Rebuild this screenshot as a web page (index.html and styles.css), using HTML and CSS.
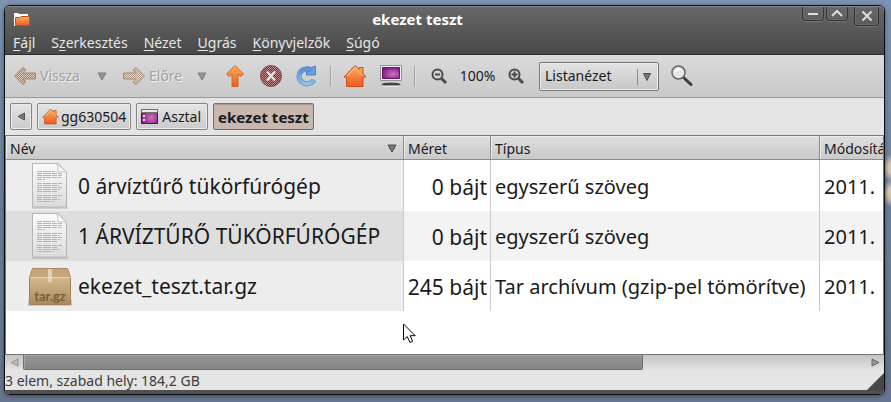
FILE: index.html
```
<!DOCTYPE html>
<html lang="hu">
<head>
<meta charset="utf-8">
<title>ekezet teszt</title>
<link rel="stylesheet" href="styles.css">
</head>
<body>
<svg class="defs" aria-hidden="true">
  <defs>
    <linearGradient id="orange" x1="0" y1="0" x2="0" y2="1"><stop offset="0" stop-color="#f9b262"/><stop offset="1" stop-color="#ef5a22"/></linearGradient>
    <linearGradient id="blue" x1="0" y1="0" x2="0" y2="1"><stop offset="0" stop-color="#5a95d2"/><stop offset="1" stop-color="#8fbde8"/></linearGradient>
    <radialGradient id="violet" cx=".6" cy=".6" r=".7"><stop offset="0" stop-color="#cf6fc6"/><stop offset="1" stop-color="#77187c"/></radialGradient>
    <linearGradient id="paper" x1="0" y1="0" x2="0" y2="1"><stop offset="0" stop-color="#fbfbfb"/><stop offset="1" stop-color="#dcdcdc"/></linearGradient>
    <linearGradient id="box" x1="0" y1="0" x2="0" y2="1"><stop offset="0" stop-color="#d3b98f"/><stop offset="1" stop-color="#a98a5d"/></linearGradient>
    <pattern id="check-brown" width="2" height="2" patternUnits="userSpaceOnUse"><rect width="2" height="2" fill="#d9cbbf"/><path fill="#b97c4e" d="M0 0h1v1H0zM1 1h1v1H1z"/></pattern>
    <pattern id="check-tan" width="2" height="2" patternUnits="userSpaceOnUse"><rect width="2" height="2" fill="#d8d2ca"/><path fill="#b5a08c" d="M0 0h1v1H0zM1 1h1v1H1z"/></pattern>
    <pattern id="check-red" width="2" height="2" patternUnits="userSpaceOnUse"><rect width="2" height="2" fill="#c08c8c"/><path fill="#82272b" d="M0 0h1v1H0zM1 1h1v1H1z"/></pattern>
    <symbol id="house" viewBox="0 0 24 24"><path fill="url(#orange)" stroke="#c94f1c" d="M12 1.500L16 5.500V3.500h4v6l3 3.500h-3v9.500H3.500V13H1z"/><path fill="none" stroke="#fbc795" d="M4 12L12 3.500l8 8.500"/></symbol>
    <symbol id="document" viewBox="0 0 38 48"><path fill="#000" opacity=".12" d="M1 45h36v2H1z"/><path fill="url(#paper)" stroke="#b4b4b4" d="M1.500 1.500h26l8 9v34.500h-34z"/><path fill="#fff" stroke="#c4c4c4" d="M26 1.500q2 5 .5 8.500 5-1 9 .5z"/><path stroke="#b4b4b4" stroke-dasharray="5 1 8 1" d="M6 9.500h18M6 11.500h25M6 13.500h25M6 15.500h24M6 17.500h8M6 21.500h25M6 23.500h22M6 25.500h25M6 27.500h23M6 29.500h21M6 33.500h25M6 35.500h20M6 37.500h23M6 39.500h17"/></symbol>
  </defs>
</svg>
<main class="window">
  <header class="chrome">
    <div class="titlebar">
      <svg class="app-icon" width="18" height="16" viewBox="0 0 18 16" aria-hidden="true"><path fill="#fff" d="M1 1h4l1 1h9v3H3v9H1z"/><path fill="url(#orange)" stroke="#c8491a" d="M2.500 13.500V5.500H7l1-1h8.500v9z"/></svg>
      <h1 class="title">ekezet teszt</h1>
      <div class="controls">
        <button class="control" type="button" aria-label="Kis méret"><svg width="12" height="12" viewBox="0 0 12 12"><path d="M1 6h10"/></svg></button>
        <button class="control" type="button" aria-label="Teljes méret"><svg width="12" height="12" viewBox="0 0 12 12"><path d="M1 8l5-5 5 5"/></svg></button>
        <button class="control control-close" type="button" aria-label="Bezárás"><svg width="12" height="12" viewBox="0 0 12 12"><path d="M1.500 1.500l9 9M10.500 1.500l-9 9"/></svg></button>
      </div>
    </div>
    <nav class="menubar">
      <button type="button"><u>F</u>ájl</button>
      <button type="button">S<u>z</u>erkesztés</button>
      <button type="button"><u>N</u>ézet</button>
      <button type="button"><u>U</u>grás</button>
      <button type="button"><u>K</u>önyvjelzők</button>
      <button type="button"><u>S</u>úgó</button>
    </nav>
  </header>

  <div class="toolbar">
    <button class="nav back" type="button" disabled><svg width="24" height="20" viewBox="0 0 24 20"><path fill="url(#check-brown)" stroke="#b58360" stroke-linejoin="round" d="M1.500 10L10 1.500l3 2.500-3 3h12.500v6H10l3 3-3 2.500z"/></svg>Vissza</button>
    <button class="history" type="button" aria-label="Előzmények vissza"><svg width="10" height="9" viewBox="0 0 10 9"><path fill="#929292" stroke="#818181" d="M1 1h8L5 8z"/></svg></button>
    <button class="nav forward" type="button" disabled><svg width="24" height="20" viewBox="0 0 24 20"><path fill="url(#check-tan)" stroke="#a08c78" stroke-linejoin="round" d="M22.500 10L14 1.500l-3 2.500 3 3H1.500v6H14l-3 3 3 2.500z"/></svg>Előre</button>
    <button class="history" type="button" aria-label="Előzmények előre"><svg width="10" height="9" viewBox="0 0 10 9"><path fill="#929292" stroke="#818181" d="M1 1h8L5 8z"/></svg></button>
    <button class="tool" type="button" aria-label="Fel"><svg width="20" height="24" viewBox="0 0 20 24"><path fill="url(#orange)" stroke="#d4641f" stroke-linejoin="round" d="M10 1.500l8.500 8.500-2.500 2.500-3-2.500v12.500H7V10l-3 2.500L1.500 10z"/></svg></button>
    <button class="tool" type="button" aria-label="Leállítás" disabled><svg width="24" height="24" viewBox="0 0 24 24"><circle cx="12" cy="12" r="10.500" fill="url(#check-red)" stroke="#8d4a4b"/><path stroke="#f2eded" stroke-width="2" d="M8 7.500l8 9M16 7.500l-8 9"/></svg></button>
    <button class="tool" type="button" aria-label="Frissítés"><svg width="22" height="24" viewBox="0 0 22 24"><path fill="none" stroke="#4c83bd" stroke-width="5" d="M18 16a8 7.500 0 1 1-2-9.500"/><path fill="#6aa2dc" stroke="#4c83bd" stroke-linejoin="round" d="M19.500 2v9h-9v-3l4-1 2-4z"/><path fill="none" stroke="url(#blue)" stroke-width="4" d="M18 16a8 7.500 0 1 1-2-9.500"/></svg></button>
    <span class="separator"></span>
    <button class="tool" type="button" aria-label="Saját mappa"><svg width="24" height="24"><use href="#house"/></svg></button>
    <button class="tool" type="button" aria-label="Számítógép"><svg width="24" height="24" viewBox="0 0 24 24"><path fill="#f4f4f4" stroke="#929292" d="M1.500 1.500h21v15h-21z"/><path fill="url(#violet)" stroke="#61165f" d="M3.500 3.500h17v11h-17z"/><path fill="#ddd" d="M9 17h6v2H9z"/><ellipse cx="12" cy="20.500" rx="9.500" ry="2" fill="#444"/><path fill="#eee" d="M3 21.500h18l-2 1.500H5z"/></svg></button>
    <span class="separator"></span>
    <button class="tool" type="button" aria-label="Kicsinyítés"><svg width="18" height="18" viewBox="0 0 18 18"><g fill="none" stroke="#4a4a4a" stroke-width="2"><circle cx="7.500" cy="7.500" r="5"/><path d="M5 7.500h5"/><path stroke-width="3" d="M11.500 11.500l4.500 4.500"/></g></svg></button>
    <output class="zoom">100%</output>
    <button class="tool" type="button" aria-label="Nagyítás"><svg width="18" height="18" viewBox="0 0 18 18"><g fill="none" stroke="#4a4a4a" stroke-width="2"><circle cx="7.500" cy="7.500" r="5"/><path d="M4.500 7.500h6M7.500 4.500v6"/><path stroke-width="3" d="M11.500 11.500l4.500 4.500"/></g></svg></button>
    <div class="combo">
      <select aria-label="Nézet"><option>Listanézet</option></select>
      <svg class="combo-arrow" width="18" height="18" viewBox="0 0 18 18" aria-hidden="true"><path stroke="#8b8b8b" d="M.5 1v16"/><path fill="#777" stroke="#4f4f4f" d="M6.500 5.500h7L10 12.500z"/></svg>
    </div>
    <button class="tool" type="button" aria-label="Keresés"><svg width="24" height="24" viewBox="0 0 24 24"><path stroke="#3d3d3d" stroke-width="3" stroke-linecap="round" d="M13 13l8 7.500"/><circle cx="8.500" cy="8.500" r="6.500" fill="#e6e6e6" stroke="#666" stroke-width="1.500"/><path fill="#fff" opacity=".8" d="M4.500 8a4 4 0 0 1 7-2z"/></svg></button>
  </div>

  <nav class="pathbar">
    <button class="crumb crumb-scroll" type="button" aria-label="Előző"><svg width="8" height="9" viewBox="0 0 8 9"><path fill="#777" stroke="#555" d="M7.500 1v7L1 4.500z"/></svg></button>
    <button class="crumb" type="button"><svg width="17" height="17"><use href="#house"/></svg>gg630504</button>
    <button class="crumb crumb-place" type="button"><svg width="17" height="15" viewBox="0 0 17 15"><path fill="url(#violet)" stroke="#4c1450" d="M.5.500h16v14H.5z"/><path fill="#eeeae0" stroke="#77705f" d="M.5.500h16v3H.5z"/><path fill="#f3d9f1" d="M2 6h2v2H2zM2 10h2v2H2z"/></svg>Asztal</button>
    <button class="crumb crumb-current" type="button" aria-current="page">ekezet teszt</button>
  </nav>

  <section class="list">
    <table class="files">
      <colgroup><col class="col-name"><col class="col-size"><col class="col-type"><col></colgroup>
      <thead>
        <tr>
          <th scope="col"><span class="sorted">Név<svg width="10" height="9" viewBox="0 0 10 9" aria-hidden="true"><path fill="#777" stroke="#4c4c4c" d="M1 1h8L5 8z"/></svg></span></th>
          <th scope="col">Méret</th><th scope="col">Típus</th><th scope="col">Módosítás</th>
        </tr>
      </thead>
      <tbody>
        <tr><td><span class="file"><svg width="38" height="48"><use href="#document"/></svg>0 árvíztűrő tükörfúrógép</span></td><td>0 bájt</td><td>egyszerű szöveg</td><td>2011.</td></tr>
        <tr><td><span class="file"><svg width="38" height="48"><use href="#document"/></svg>1 ÁRVÍZTŰRŐ TÜKÖRFÚRÓGÉP</span></td><td>0 bájt</td><td>egyszerű szöveg</td><td>2011.</td></tr>
        <tr><td><span class="file"><svg width="44" height="40" viewBox="0 -2 44 40"><path fill="#000" opacity=".15" d="M0 32h44v6H0z"/><path fill="#c5a67c" stroke="#a88a62" d="M4.500 .5h35l3 9h-41z"/><path fill="url(#box)" stroke="#a1845a" d="M1.500 9.500h41v27h-41z"/><path stroke="#e5d3b4" d="M2 9.500h40"/><path fill="#e7dac5" opacity=".8" d="M20 1h4v13h-4z"/><text class="box-label" x="22" y="33" text-anchor="middle">tar.gz</text></svg>ekezet_teszt.tar.gz</span></td><td>245 bájt</td><td>Tar archívum (gzip-pel tömörítve)</td><td>2011.</td></tr>
      </tbody>
    </table>
    <svg class="pointer" width="14" height="21" viewBox="0 0 14 21" aria-hidden="true"><path fill="#fff" stroke="#000" d="M.5 1v16l3.700-3.500L7 19.500l2.700-1.200-2.500-5.600h5z"/></svg>
  </section>

  <div class="scrollbar">
    <svg class="scroll-arrow" width="9" height="9" viewBox="0 0 9 9"><path fill="#bbb" stroke="#929292" d="M8 1v7L1 4.500z"/></svg>
    <div class="track"><div class="thumb"></div></div>
    <svg class="scroll-arrow" width="9" height="9" viewBox="0 0 9 9"><path fill="#999" stroke="#666" d="M1 1v7l7-3.500z"/></svg>
  </div>
  <footer class="status">3 elem, szabad hely: 184,2 GB</footer>
  <svg class="grip" width="18" height="18" viewBox="0 0 18 18" aria-hidden="true"><path fill="#484848" d="M18 0v18H0z"/></svg>
</main>
</body>
</html>
```
FILE: styles.css
```
* { box-sizing: border-box; }

body {
  margin: 0;
  min-height: 100vh;
  padding: 5px 6px 7px 4px;
  display: flex;
  background:
    radial-gradient(ellipse 8px 14px at 100% 168px, #d8c3ac 40%, transparent),
    radial-gradient(ellipse 8px 14px at 100% 193px, #d8c3ac 40%, transparent),
    linear-gradient(#7b92b0, #6a809f 50%, #66758e);
  color: #1a1a1a;
  font-family: "Noto Sans", "Open Sans", sans-serif;
  font-size: 14px;
  line-height: 18px;
}

svg { display: block; flex: none; }
.defs { position: absolute; width: 0; height: 0; }

button {
  margin: 0;
  padding: 0;
  border: 0;
  background: none;
  color: inherit;
  font: inherit;
}

.window {
  position: relative;
  flex: 1;
  min-width: 0;
  display: flex;
  flex-direction: column;
  overflow: hidden;
  border: 1px solid #0c0c0c;
  border-radius: 6px;
  background: #e4e4e4;
  box-shadow: 0 1px 4px rgba(0, 0, 0, .4);
}

.chrome {
  border-top: 1px solid #8a8a88;
  border-bottom: 1px solid #2e2e2e;
  background: linear-gradient(#686868, #484848);
  color: #e6e6e6;
}

.titlebar { display: flex; height: 27px; }
.app-icon { margin: 5px 2px 0 8px; }
.title {
  flex: 1;
  margin: 0;
  padding-top: 3px;
  color: #fff;
  font-size: 15px;
  line-height: 18px;
  text-align: center;
}

.controls { display: flex; align-items: flex-start; gap: 2px; padding-right: 5px; }
.control {
  display: grid;
  place-items: center;
  width: 22px;
  height: 14px;
  border: 1px solid #333;
  border-top: 0;
  border-radius: 0 0 4px 4px;
  box-shadow: 0 1px 0 #777, inset 0 0 0 1px #6c6c6c;
}
.control-close { width: 25px; height: 19px; margin-left: 4px; }
.control path { fill: none; stroke: #dedede; stroke-width: 2; }

.menubar { display: flex; gap: 16px; height: 20px; padding-left: 8px; }
.menubar button { line-height: 18px; height: 18px; }
.menubar u { text-underline-offset: 2px; }

.toolbar {
  display: flex;
  align-items: center;
  height: 43px;
  padding-left: 8px;
  border-bottom: 1px solid #999;
  background: linear-gradient(#dadada, #c9c9c9);
}
.nav {
  display: flex;
  align-items: center;
  gap: 3px;
  color: #a0a0a0;
  text-shadow: 1px 1px 0 #f4f4f4;
}
.back { width: 74px; }
.forward { width: 70px; padding-left: 5px; }
.history, .tool { display: grid; place-items: center; height: 36px; }
.history { width: 30px; }
.tool { width: 36px; }
.separator {
  width: 2px;
  height: 20px;
  margin: 0 5px;
  border-left: 1px solid #a2a2a2;
  border-right: 1px solid #dedede;
}
.zoom { width: 41px; text-align: center; }
.combo { position: relative; width: 120px; margin: 0 5px; }
.combo select {
  display: block;
  width: 100%;
  height: 29px;
  padding: 0 5px;
  appearance: none;
  border: 1px solid #777;
  border-radius: 2px;
  background: linear-gradient(#e2e2e2, #c7c7c7);
  box-shadow: inset 0 0 0 1px #ededed;
  color: inherit;
  font: inherit;
}
.combo-arrow { position: absolute; top: 6px; right: 4px; pointer-events: none; }

.pathbar { display: flex; gap: 5px; height: 37px; padding: 5px; }
.crumb {
  display: flex;
  align-items: center;
  gap: 2px;
  height: 27px;
  padding: 0 4px;
  border: 1px solid #858585;
  border-radius: 2px;
  background: linear-gradient(#e4e4e4, #cbcbcb);
  box-shadow: inset 0 0 0 1px #ececec;
}
.crumb-scroll { padding: 0 6px; }
.crumb-place { gap: 4px; padding-right: 6px; }
.crumb-current {
  border-color: #77706c;
  background: #c8b8b0;
  box-shadow: inset 0 1px 1px #a79a93;
  font-size: 15px;
  font-weight: 700;
}

.list {
  position: relative;
  flex: 1;
  overflow: hidden;
  border: 1px solid #777;
  background: #fff;
}
.files {
  width: 120%;
  table-layout: fixed;
  border-collapse: separate;
  border-spacing: 0;
  white-space: nowrap;
}
.col-name { width: 398px; }
.col-size { width: 87px; }
.col-type { width: 329px; }

.files th {
  height: 24px;
  padding: 2px 4px 0;
  border-right: 1px solid #8d8d8d;
  border-bottom: 1px solid #8d8d8d;
  background: linear-gradient(#dedede, #cacaca);
  box-shadow: inset 1px 1px 0 #ebebeb;
  font-weight: 400;
  text-align: left;
}
.sorted { display: flex; align-items: center; justify-content: space-between; padding-right: 2px; }

.files td {
  height: 50px;
  padding: 2px 4px 0;
  border-right: 1px solid #c9c9c9;
  font-size: 20px;
  line-height: 28px;
}
.files tbody tr:first-child td { height: 51px; }
.files td:first-child { padding: 0; background: #ededed; font-size: 21px; }
.files td:nth-child(2) { padding: 2px 3px 0; font-size: 21px; text-align: right; }
.files tbody tr:nth-child(2) td { background: #f3f3f3; }
.files tbody tr:nth-child(2) td:first-child { background: #dedede; }
.file { display: grid; grid-template-columns: 44px 1fr; gap: 6px; align-items: center; padding-left: 22px; }
.file svg { justify-self: center; }
.box-label { fill: #77603d; font-family: Lato, sans-serif; font-size: 13px; font-weight: 700; }

.pointer { position: absolute; left: 397px; top: 187px; }

.scrollbar {
  display: flex;
  align-items: center;
  height: 15px;
  background: linear-gradient(#c4c4c4, #e2e2e2);
}
.scroll-arrow { margin: 0 4px 0 5px; }
.track { flex: 1; height: 100%; }
.thumb {
  width: 73.6%;
  height: 100%;
  border: 1px solid #707070;
  border-top: 0;
  border-radius: 0 0 2px 2px;
  background: linear-gradient(#949494, #868686);
  box-shadow: inset 1px 1px 0 #a5a5a5;
}

.status {
  height: 24px;
  padding-top: 2px;
  border-bottom: 4px solid #505050;
  color: #3c3c3c;
  font-size: 14px;
}
.grip { position: absolute; right: 0; bottom: 3px; }
```
